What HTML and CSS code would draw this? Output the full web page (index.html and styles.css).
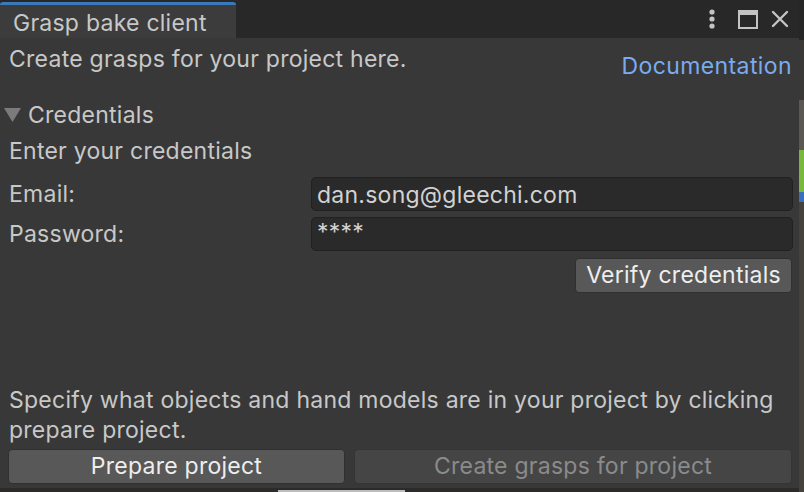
FILE: index.html
```html
<!DOCTYPE html>
<html>
<head>
<meta charset="utf-8">
<link rel="stylesheet" href="styles.css">
</head>
<body>
<div class="screen">
  <div class="window">
    <div class="tabbar">
      <div class="tab">Grasp bake client</div>
      <div class="tab-tools">
        <svg class="ico kebab" width="10" height="22" viewBox="0 0 10 22"><circle cx="5" cy="4" r="2.6" fill="#c4c4c4"/><circle cx="5" cy="11" r="2.6" fill="#c4c4c4"/><circle cx="5" cy="18" r="2.6" fill="#c4c4c4"/></svg>
        <svg class="ico max" width="20" height="19" viewBox="0 0 20 19"><rect x="1" y="1" width="18" height="17" fill="none" stroke="#c4c4c4" stroke-width="2"/><rect x="1" y="1" width="18" height="4" fill="#c4c4c4"/></svg>
        <svg class="ico" width="18" height="18" viewBox="0 0 18 18"><path d="M2 2 L16 16 M16 2 L2 16" stroke="#c4c4c4" stroke-width="2.4" stroke-linecap="round"/></svg>
      </div>
    </div>
    <div class="panel">
      <div class="header">
        <div class="text">Create grasps for your project here.</div>
        <div class="link">Documentation</div>
      </div>
      <div class="foldout">
        <svg class="tri" width="17" height="14" viewBox="0 0 17 14"><path d="M0 0 H17 L8.5 14 Z" fill="#7b7b7b"/></svg>
        <span>Credentials</span>
      </div>
      <div class="text sub">Enter your credentials</div>
      <div class="field-row first">
        <div class="label">Email:</div>
        <div class="input">dan.song@gleechi.com</div>
      </div>
      <div class="field-row">
        <div class="label">Password:</div>
        <div class="input pw">****</div>
      </div>
      <div class="verify-row">
        <div class="btn verify">Verify credentials</div>
      </div>
      <div class="spacer"></div>
      <div class="text help">Specify what objects and hand models are in your project by clicking prepare project.</div>
      <div class="actions">
        <div class="btn prep">Prepare project</div>
        <div class="btn create disabled">Create grasps for project</div>
      </div>
    </div>
    <div class="bottom-edge"><div class="edge-line"></div></div>
  </div>
  <div class="side-strip">
    <div class="s1"></div><div class="s2"></div><div class="s3"></div><div class="s4"></div><div class="s6"></div><div class="s5"></div>
  </div>
</div>
</body>
</html>
```

FILE: styles.css
```css
* { box-sizing: border-box; }
html, body { margin: 0; padding: 0; }
body {
  width: 804px;
  height: 492px;
  overflow: hidden;
  background: #2b2b2b;
  font-family: Inter, "Noto Sans", sans-serif;
  font-size: 23px;
  letter-spacing: 0.25px;
  color: #c8c8c8;
}
.screen { display: flex; width: 804px; height: 492px; }
.window {
  width: 799px;
  height: 492px;
  display: flex;
  flex-direction: column;
}
.tabbar {
  height: 38px;
  background: #282828;
  display: flex;
  align-items: stretch;
  flex: none;
}
.tab {
  width: 236px;
  background: #3c3c3c;
  border-top: 3px solid #3a79bb;
  border-radius: 3px 3px 0 0;
  padding: 5px 0 0 13px;
  color: #c8c8c8;
  line-height: 27px;
  margin-top: 2px;
}
.tab-tools {
  margin-left: auto;
  display: flex;
  align-items: center;
  padding: 0 10px 0 0;
}
.tab-tools .kebab { margin-right: 21px; }
.tab-tools .max { margin-right: 13px; }
.panel {
  flex: 1;
  background: #383838;
  display: flex;
  flex-direction: column;
  padding: 0 6px 4px 8px;
}
.text { line-height: 30px; }
.header {
  display: flex;
  justify-content: space-between;
  align-items: flex-start;
  padding: 6px 0 0 1px;
  height: 97px;
}
.link {
  color: #7aabf0;
  margin-top: 8px;
  margin-right: 1px;
  letter-spacing: 0.4px;
}
.foldout {
  display: flex;
  align-items: center;
  height: 30px;
  margin-top: -35px;
  margin-left: -4px;
}
.foldout .tri { margin-right: 7px; }
.sub { margin: 6px 0 0 1px; }
.field-row {
  display: flex;
  align-items: center;
  height: 34px;
  margin-top: 6px;
}
.field-row.first { margin-top: 11px; }
.label { width: 303px; padding-left: 1px; flex: none; }
.input {
  flex: 1;
  height: 34px;
  background: #2a2a2a;
  border: 1px solid #212121;
  border-radius: 5px;
  padding: 1px 0 0 5px;
  line-height: 32px;
  color: #d2d2d2;
}
.input.pw { line-height: 26px; }
.verify-row { display: flex; justify-content: flex-end; margin-top: 7px; }
.btn {
  background: #585858;
  border: 1px solid #303030;
  border-radius: 4px;
  color: #eeeeee;
  text-align: center;
  height: 35px;
  line-height: 33px;
  white-space: nowrap;
}
.verify { width: 217px; margin-right: 1px; }
.spacer { flex: 1; }
.help { margin-left: 1px; padding-right: 10px; }
.actions {
  display: flex;
  gap: 9px;
  margin-top: 4px;
  padding-right: 1px;
}
.prep { width: 337px; flex: none; }
.create { flex: 1; }
.disabled {
  background: #454545;
  color: #8b8b8b;
  border-color: #353535;
}
.bottom-edge {
  height: 4px;
  background: #2c2b29;
  position: relative;
  flex: none;
}
.edge-line {
  position: absolute;
  left: 278px;
  width: 127px;
  bottom: 0;
  height: 2px;
  background: #bdbdbd;
}
.side-strip {
  width: 5px;
  display: flex;
  flex-direction: column;
  background: #4a4743;
}
.side-strip .s1 { height: 40px; background: #262626; }
.side-strip .s2 { height: 60px; background: #3a3937; }
.side-strip .s3 { height: 50px; background: #5b5853; }
.side-strip .s4 { height: 42px; background: #78b83a; }
.side-strip .s6 { height: 10px; background: #3a6fc0; }
.side-strip .s5 { flex: 1; background: #45423e; }
```
